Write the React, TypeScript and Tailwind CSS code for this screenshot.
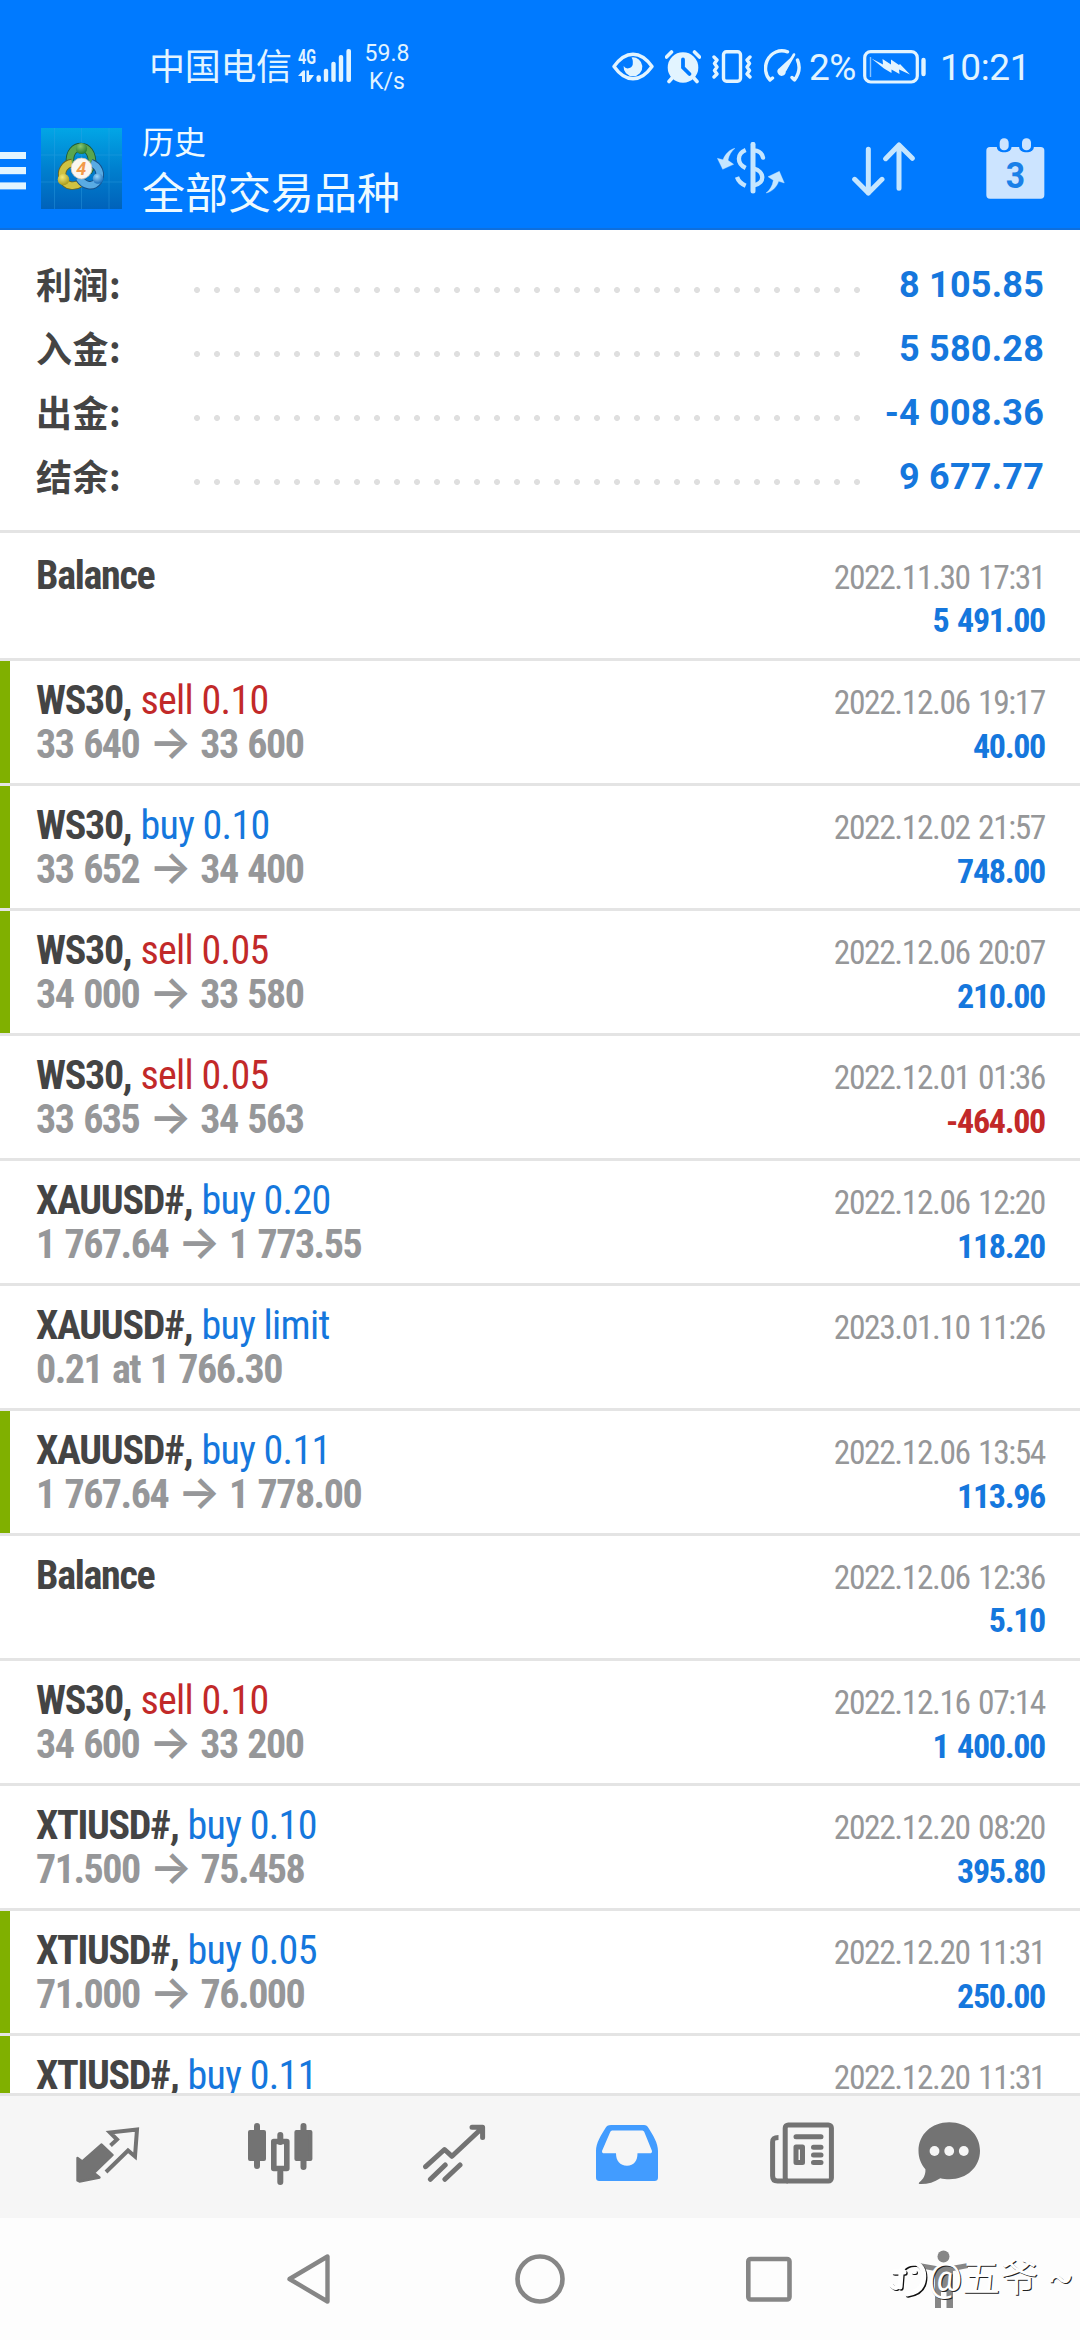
import type { ReactNode } from 'react';

type Deal = {
  symbol: string;
  side?: 'buy' | 'sell';
  action?: string;
  from?: string;
  to?: string;
  note?: string;
  time: string;
  profit?: string;
  marked?: boolean;
};

const summary = [
  { label: '利润:', value: '8 105.85' },
  { label: '入金:', value: '5 580.28' },
  { label: '出金:', value: '-4 008.36' },
  { label: '结余:', value: '9 677.77' },
];

const deals: Deal[] = [
  { symbol: 'Balance', time: '2022.11.30 17:31', profit: '5 491.00' },
  { symbol: 'WS30,', side: 'sell', action: 'sell 0.10', from: '33 640', to: '33 600', time: '2022.12.06 19:17', profit: '40.00', marked: true },
  { symbol: 'WS30,', side: 'buy', action: 'buy 0.10', from: '33 652', to: '34 400', time: '2022.12.02 21:57', profit: '748.00', marked: true },
  { symbol: 'WS30,', side: 'sell', action: 'sell 0.05', from: '34 000', to: '33 580', time: '2022.12.06 20:07', profit: '210.00', marked: true },
  { symbol: 'WS30,', side: 'sell', action: 'sell 0.05', from: '33 635', to: '34 563', time: '2022.12.01 01:36', profit: '-464.00' },
  { symbol: 'XAUUSD#,', side: 'buy', action: 'buy 0.20', from: '1 767.64', to: '1 773.55', time: '2022.12.06 12:20', profit: '118.20' },
  { symbol: 'XAUUSD#,', side: 'buy', action: 'buy limit', note: '0.21 at 1 766.30', time: '2023.01.10 11:26' },
  { symbol: 'XAUUSD#,', side: 'buy', action: 'buy 0.11', from: '1 767.64', to: '1 778.00', time: '2022.12.06 13:54', profit: '113.96', marked: true },
  { symbol: 'Balance', time: '2022.12.06 12:36', profit: '5.10' },
  { symbol: 'WS30,', side: 'sell', action: 'sell 0.10', from: '34 600', to: '33 200', time: '2022.12.16 07:14', profit: '1 400.00' },
  { symbol: 'XTIUSD#,', side: 'buy', action: 'buy 0.10', from: '71.500', to: '75.458', time: '2022.12.20 08:20', profit: '395.80' },
  { symbol: 'XTIUSD#,', side: 'buy', action: 'buy 0.05', from: '71.000', to: '76.000', time: '2022.12.20 11:31', profit: '250.00', marked: true },
  { symbol: 'XTIUSD#,', side: 'buy', action: 'buy 0.11', time: '2022.12.20 11:31', marked: true },
];

function StatusBar() {
  return (
    <div className="flex h-[112px] items-start pt-[40px] text-[#e2f4ff]">
      <span className="ml-[149px] mt-[2px] w-[143px] text-[36px] leading-[52px] whitespace-nowrap tracking-[-0.3px]">中国电信</span>
      <svg className="ml-[6px] mt-[9px] h-[34px] w-[54px] overflow-visible" viewBox="0 0 54 34" fill="currentColor">
        <text x="0" y="15" fontSize="20" fontWeight="700" textLength="18" lengthAdjust="spacingAndGlyphs">
          4G
        </text>
        <path d="M0 27 L5 21.5 L7 21.5 L7 33 L4 33 L4 27 Z M8.5 21.5 L11 21.5 L11 26 L16 26 L11 33 L8.5 33 Z" />
        <rect x="18.5" y="26.3" width="4.4" height="6.7" rx="2" />
        <rect x="25.8" y="19.7" width="4.4" height="13.3" rx="2" />
        <rect x="33.3" y="12.7" width="4.4" height="20.3" rx="2" />
        <rect x="40.8" y="6" width="4.4" height="27" rx="2" />
        <rect x="48.4" y="0" width="4.6" height="33" rx="2" />
      </svg>
      <div className="ml-[11px] w-[48px] text-center text-[23px] leading-[28px]">
        <div>59.8</div>
        <div>K/s</div>
      </div>

      <svg className="ml-[201px] mt-[12px] h-[29px] w-[42px]" viewBox="0 0 42 29" fill="none" stroke="currentColor">
        <path d="M2 14.5 C8 6 14 2.2 21 2.2 S34 6 40 14.5 C34 23 28 26.8 21 26.8 S8 23 2 14.5 Z" strokeWidth="3.4" strokeLinejoin="round" />
        <path d="M19.5 5.5 A9.4 9.4 0 1 1 11.6 14 A5 5 0 0 0 20.8 10.8 C21 8.5 20.5 7 19.5 5.5 Z" fill="currentColor" stroke="none" />
      </svg>
      <svg className="ml-[11px] mt-[10px] h-[34px] w-[36px]" viewBox="0 0 36 34" fill="currentColor">
        <circle cx="18" cy="17.5" r="15.3" />
        <path d="M1.5 7 L6.5 2 M34.5 7 L29.5 2 M4 31.5 L8 27 M32 31.5 L28 27" stroke="currentColor" strokeWidth="3.6" strokeLinecap="round" />
        <path d="M18 9.5 V17.5 L24.5 24" stroke="#007aff" strokeWidth="3.8" strokeLinecap="round" fill="none" />
      </svg>
      <svg className="ml-[11px] mt-[10px] h-[33px] w-[40px]" viewBox="0 0 40 33" fill="none" stroke="currentColor" strokeWidth="3.4" strokeLinecap="round" strokeLinejoin="round">
        <rect x="11.5" y="1.8" width="17" height="29.4" rx="3" />
        <path d="M2 7 L5 10 L2.5 13.5 L5 17 L2.5 20.5 L5 24 L2 27 M38 7 L35 10 L37.5 13.5 L35 17 L37.5 20.5 L35 24 L38 27" />
      </svg>
      <svg className="ml-[12px] mt-[9px] h-[34px] w-[37px]" viewBox="0 0 37 34" fill="none" stroke="currentColor" strokeWidth="3.4" strokeLinecap="round" strokeLinejoin="round">
        <path d="M6 31 C1 26 0.5 18 3 12 C7 3 16 0 23.5 2.8 M33.5 11 C36.5 18 35 25 30.5 31 L28 28.5 M6 31 L8.5 29" />
        <path d="M30 5.5 L21.5 20.5" strokeWidth="2.6" />
        <path d="M29 6.5 L15.5 19 A4.2 4.2 0 1 0 21.8 22.5 Z" fill="currentColor" stroke="none" />
      </svg>
      <span className="ml-[8px] mt-[1px] text-[37px] leading-[54px] tracking-[-0.5px]">2%</span>
      <svg className="ml-[7px] mt-[10px] h-[34px] w-[64px]" viewBox="0 0 64 34" fill="none" stroke="currentColor">
        <rect x="1.7" y="1.7" width="52.6" height="30.3" rx="6" strokeWidth="3.2" />
        <path d="M7.5 7 V27" strokeWidth="1.4" opacity="0.6" />
        <path d="M8.5 8.5 L20 14.5 L19.5 9 L28 14.5 L28 9.5 L36 15 L37 14 L47 24.5 L36 19.5 L36.5 24 L28.5 19.5 L28.5 23 L21 18.5 Z" fill="currentColor" stroke="none" />
        <path d="M60.5 10 V24" strokeWidth="4.4" strokeLinecap="round" />
      </svg>
      <span className="ml-[13px] mt-[1px] text-[37px] leading-[54px] tracking-[-0.4px]">10:21</span>
    </div>
  );
}

function AppLogo() {
  return (
    <svg className="ml-[15px] mt-[16px] h-[81px] w-[81px]" viewBox="0 0 81 81">
      <defs>
        <linearGradient id="logoBg" x1="0" y1="0" x2="0" y2="1">
          <stop offset="0" stopColor="#02a6e6" />
          <stop offset="0.5" stopColor="#0080cf" />
          <stop offset="1" stopColor="#0062ba" />
        </linearGradient>
        <radialGradient id="green" cx="0.4" cy="0.3" r="0.7">
          <stop offset="0" stopColor="#8cc870" />
          <stop offset="1" stopColor="#237a35" />
        </radialGradient>
        <radialGradient id="yellow" cx="0.4" cy="0.3" r="0.7">
          <stop offset="0" stopColor="#f3ea7a" />
          <stop offset="1" stopColor="#a89a1c" />
        </radialGradient>
        <radialGradient id="blue" cx="0.4" cy="0.3" r="0.7">
          <stop offset="0" stopColor="#9ad6fa" />
          <stop offset="1" stopColor="#1b6fbd" />
        </radialGradient>
      </defs>
      <rect width="81" height="81" fill="url(#logoBg)" />
      <path d="M13.5 0 V81 M40.5 0 V81 M68 0 V81 M0 27 H81 M0 54 H81" stroke="#35a5e4" strokeWidth="0.8" opacity="0.45" />
      <path d="M29 35 C28 24 34 19 40 19 S52 25 51 37 L47 44" fill="none" stroke="#1f5a3a" strokeWidth="8.4" />
      <path d="M29 35 C28 24 34 19 40 19 S52 25 51 37 L47 44" fill="none" stroke="#5aa64f" strokeWidth="6.6" />
      <path d="M31 35 C24 36 19 43 22 51 C25 59 34 59 40 55" fill="none" stroke="#6b6420" strokeWidth="8.4" />
      <path d="M31 35 C24 36 19 43 22 51 C25 59 34 59 40 55" fill="none" stroke="#cfc242" strokeWidth="6.6" />
      <path d="M50 35 C58 38 61 46 57 53 C52 60 43 58 38 50" fill="none" stroke="#174f86" strokeWidth="8.4" />
      <path d="M50 35 C58 38 61 46 57 53 C52 60 43 58 38 50" fill="none" stroke="#59abe3" strokeWidth="6.6" />
      <circle cx="40.5" cy="20.5" r="5.6" fill="url(#green)" />
      <circle cx="22.5" cy="51.5" r="5.8" fill="url(#yellow)" />
      <circle cx="57" cy="50.5" r="5.2" fill="url(#blue)" />
      <circle cx="40.5" cy="40.5" r="10.4" fill="#fbf7f2" stroke="#d8c9b8" strokeWidth="0.8" />
      <text x="35.3" y="47" fontSize="18" fontWeight="700" fontStyle="italic" fill="#f29a4a">
        4
      </text>
    </svg>
  );
}

function Header() {
  return (
    <header className="h-[230px] border-b-2 border-[#0e6fdd] bg-[#007aff]">
      <StatusBar />
      <div className="flex items-start text-[#eefaff]">
        <svg className="mt-[40px] h-[38px] w-[26px]" viewBox="0 0 26 38" fill="#e2f5ff">
          <rect y="0" width="26" height="7" />
          <rect y="15" width="26" height="7.2" />
          <rect y="30.4" width="26" height="7" />
        </svg>
        <AppLogo />
        <div className="ml-[20px] w-[300px]">
          <div className="mt-[8px] text-[32px] leading-[46px]">历史</div>
          <div className="mt-[-1px] text-[43px] leading-[58px]">全部交易品种</div>
        </div>
        {/* currency exchange */}
        <svg className="ml-[275px] mt-[30px] h-[52px] w-[68px]" viewBox="49 35 204 156" fill="#c5e6ff" stroke="#c5e6ff">
          <path d="M103 54 C93 62 85 74 82 90 L99 102 L66 117 L50 84 L67 88 C74 71 87 57 103 54 Z" strokeWidth="1" />
          <path d="M196 188 C207 180 215 168 218 150 L202 139 L236 123 L251 158 L234 153 C228 171 213 185 196 188 Z" strokeWidth="1" />
          <path d="M157 42 V182" strokeWidth="15" strokeLinecap="round" fill="none" />
          <path d="M135 59 C108 70 108 100 135 113" strokeWidth="13" fill="none" />
          <path d="M109 140 C113 152 121 160 135 166" strokeWidth="13" strokeLinecap="butt" fill="none" />
          <path d="M160 60 C174 61 184 68 187 82" strokeWidth="13" strokeLinecap="round" fill="none" />
          <path d="M160 115 C190 122 196 158 160 165" strokeWidth="13" fill="none" />
        </svg>
        {/* sort */}
        <svg className="ml-[67px] mt-[30px] h-[54px] w-[63px]" viewBox="451 35 189 162" fill="none" stroke="#c5e6ff" strokeWidth="15" strokeLinecap="round" strokeLinejoin="round">
          <path d="M500 57 V188 M459 147 L500 188 L541 147" />
          <path d="M592 174 V44 M552 85 L592 44 L632 84" />
        </svg>
        {/* calendar */}
        <svg className="ml-[71px] mt-[26px] h-[61px] w-[59px]" viewBox="854 23 177 183">
          <rect x="855" y="50" width="174" height="155" rx="11" fill="#cce4ff" />
          <rect x="886" y="30" width="45" height="36" rx="18" fill="#007aff" />
          <rect x="953" y="30" width="45" height="36" rx="18" fill="#007aff" />
          <rect x="895" y="24" width="27" height="36" rx="13" fill="#cce4ff" />
          <rect x="962" y="24" width="27" height="36" rx="13" fill="#cce4ff" />
          <text x="942" y="173" textAnchor="middle" fontSize="112" fontWeight="700" textLength="58" lengthAdjust="spacingAndGlyphs" fill="#1a80e8">
            3
          </text>
        </svg>
      </div>
    </header>
  );
}

function Summary() {
  return (
    <section className="h-[303px] border-b-[3px] border-[#e4e4e4] px-[36px] pt-[24px]">
      {summary.map((row) => (
        <div key={row.label} className="flex h-[64px] items-center justify-between font-bold">
          <span className="mb-[6px] w-[151px] font-['Noto_Sans_CJK_SC'] text-[36px] leading-[52px] tracking-[0.5px] text-[#444444]">{row.label}</span>
          <div className="mt-[8px] h-[6px] w-[680px] bg-[radial-gradient(circle_at_center,#dfdfdf_2.6px,transparent_3.4px)] bg-[length:20px_6px]" />
          <span className="mb-[2px] w-[177px] text-right text-[36px] tracking-[0.2px] text-[#1577dd]">{row.value}</span>
        </div>
      ))}
    </section>
  );
}

function DealRow({ deal }: { deal: Deal }) {
  const sideColor = deal.side === 'sell' ? 'text-[#c22929]' : 'text-[#1577dd]';
  const profitColor = deal.profit?.startsWith('-') ? 'text-[#c22929]' : 'text-[#1577dd]';

  return (
    <div className="flex h-[125px] shrink-0 border-b-[3px] border-[#e4e4e4] first:h-[128px] first:pt-[3px]">
      <div className={deal.marked ? 'w-[10px] bg-[#80b000]' : 'w-[10px]'} />
      <div className="flex-1 pt-[18px] pl-[26px] pr-[35px] font-stretch-[75%]">
        <div className="flex h-[44px] items-baseline justify-between text-[40px] leading-[44px]">
          <div>
            <span className="font-bold tracking-[-1.3px] text-[#444444]">{deal.symbol}</span>{' '}
            <span className={`tracking-[-0.7px] ${sideColor}`}>{deal.action}</span>
          </div>
          <span className="text-[33.5px] tracking-[-1.4px] [word-spacing:2px] text-[#969799]">{deal.time}</span>
        </div>
        <div className="flex h-[44px] items-baseline justify-between text-[40px] leading-[44px] font-bold tracking-[-1.5px] [word-spacing:2px]">
          <div className="text-[#969799]">
            {deal.from && (
              <>
                {deal.from} <span className="font-['Inter'] text-[45px] leading-[0] font-semibold">→</span> {deal.to}
              </>
            )}
            {deal.note}
          </div>
          <span className={`text-[34px] tracking-[-1.3px] ${profitColor}`}>{deal.profit}</span>
        </div>
      </div>
    </div>
  );
}

function Tab({ className, viewBox, children }: { className: string; viewBox: string; children: ReactNode }) {
  return (
    <svg className={`h-[64px] shrink-0 ${className}`} viewBox={viewBox} fill="none" stroke="#737373" strokeLinecap="round" strokeLinejoin="round">
      {children}
    </svg>
  );
}

function TabBar() {
  return (
    <nav className="flex h-[125px] border-t-[3px] border-[#e4e4e4] bg-[#f6f6f6] pt-[26px]">
      {/* quotes */}
      <Tab className="ml-[76px] w-[64px]" viewBox="0 0 64 64">
        <path d="M1.5 36 L6.3 39.5 L25.6 22.5 L36.6 33 L18 51 L23.5 55.5 L3.5 59.5 L1.5 58.5 Z" fill="#737373" strokeWidth="2.4" />
        <path d="M34.5 23.5 L41 17.5 L34 10.5 L61 7.5 L59 34.5 L52 28.5 L30 50" strokeWidth="4" strokeLinecap="butt" strokeLinejoin="miter" />
      </Tab>
      {/* charts */}
      <Tab className="ml-[108px] w-[66px]" viewBox="0 0 66 64">
        <path d="M9 4 V44 M55.5 4 V45 M32.3 13 V20 M32.3 50 V60" strokeWidth="6" />
        <path d="M2 10 H16 V37 H2 Z M48.4 10 H62.4 V37 H48.4 Z" fill="#737373" strokeWidth="4" />
        <path d="M25.8 19.5 H38.8 V46.5 H25.8 Z" strokeWidth="5.6" />
      </Tab>
      {/* trade */}
      <Tab className="ml-[109px] w-[66px]" viewBox="0 0 66 64">
        <path d="M2.6 44.7 L21.5 27.5 L29 34.3 L59.4 5.8 M49 5.2 H59.6 V15.5 M7.4 57.3 L22.2 43 M21.9 57.3 L37 43" strokeWidth="5" />
      </Tab>
      {/* history */}
      <Tab className="ml-[107px] w-[62px]" viewBox="0 0 62 64">
        <path
          d="M15 3 H48 C50 3 51.5 4 52.5 6 C57 13 62 21 62 29 V55 C62 58 61 59 58 59 H4 C1 59 0 58 0 55 V29 C0 21 5 13 9.5 6 C10.5 4 12 3 15 3 Z M17 8.5 C15.5 8.5 14.5 9 14 10.5 L6 29 C6 30.5 6.5 31.3 8 31.3 H20 C20 39 24 43.7 31 43.7 S41.5 39 41.5 31.3 H54 C55.5 31.3 56 30.5 56 29 L48.5 10.5 C48 9 47 8.5 45.5 8.5 Z"
          fill="#429cff"
          fillRule="evenodd"
          stroke="none"
        />
      </Tab>
      {/* news */}
      <Tab className="ml-[112px] w-[64px]" viewBox="0 0 64 64">
        <rect x="15.2" y="3" width="46.2" height="56" rx="3" strokeWidth="5" />
        <path d="M8.5 15.5 C4 15.5 2.6 17 2.6 20 V54 C2.6 57 4 59 7.5 59 H18" strokeWidth="5" strokeLinecap="butt" />
        <path d="M26 14.7 H51 M43.5 25.2 H51 M43.5 33 H51 M43.5 40.6 H51" strokeWidth="5" />
        <rect x="26" y="25" width="6.5" height="15.5" strokeWidth="5" />
      </Tab>
      {/* messages */}
      <Tab className="ml-[84px] w-[64px]" viewBox="0 0 64 64">
        <path d="M31.3 0.3 C49 0.3 62 12.5 62 28.8 S49 57.3 31.3 57.3 C28 57.3 25 57 22.3 56.2 C16 60.5 9 62.3 1.5 62 C0.5 61.8 0.6 60.8 1.4 60.2 C5.5 57 7.8 52.5 7.4 47.2 C3 42.3 0.5 36 0.5 28.8 C0.5 12.5 13.5 0.3 31.3 0.3 Z" fill="#737373" stroke="none" />
        <circle cx="16.5" cy="29" r="4.9" fill="#f6f6f6" stroke="none" />
        <circle cx="31.2" cy="29" r="4.9" fill="#f6f6f6" stroke="none" />
        <circle cx="45.8" cy="29" r="4.9" fill="#f6f6f6" stroke="none" />
      </Tab>
    </nav>
  );
}

function SystemNav() {
  return (
    <div className="relative flex h-[122px] items-start bg-[#fdfdfd] pt-[34px]">
      <svg className="ml-[285px] h-[54px] w-[48px]" viewBox="0 0 48 54" fill="none" stroke="#868686" strokeWidth="4.4" strokeLinejoin="round">
        <path d="M4.5 27 L42.5 4.5 V49.5 Z" />
      </svg>
      <svg className="ml-[180px] h-[54px] w-[54px]" viewBox="0 0 54 54" fill="none" stroke="#868686" strokeWidth="4.6">
        <circle cx="27" cy="27" r="22.5" />
      </svg>
      <svg className="ml-[177px] h-[54px] w-[50px]" viewBox="0 0 50 54" fill="none" stroke="#868686" strokeWidth="4.6">
        <rect x="4.3" y="7" width="41.2" height="40.5" rx="2.5" />
      </svg>
      <svg className="ml-[124px] h-[60px] w-[52px] overflow-visible" viewBox="0 0 52 60" fill="#868686">
        <circle cx="25.5" cy="4.5" r="6" />
        <path d="M1 11 L18 14 H33 L50 11 V16 L35 19 V56 H28.5 V40 H23 V56 H17 V19 L1 16 Z" />
      </svg>

      {/* watermark */}
      <div className="absolute top-[36px] left-[888px] flex items-center text-white [text-shadow:1px_1px_0_#222]">
        <svg className="h-[44px] w-[40px]" viewBox="0 0 40 44" fill="none" strokeLinecap="round" strokeLinejoin="round">
          <path d="M6 16 H16 M12 31 L13 18 C13 10 19 7 28 7 C35 10 37 18 35 26 C33 34 26 37 19 38" stroke="#111" strokeWidth="5" transform="translate(1.2 1.2)" />
          <path d="M3 29 C7 34 11 32 12 27 M25 16 H27" stroke="#111" strokeWidth="4" transform="translate(1 1)" />
          <path d="M6 16 H16 M12 31 L13 18 C13 10 19 7 28 7 C35 10 37 18 35 26 C33 34 26 37 19 38" stroke="#fff" strokeWidth="5" />
          <path d="M3 29 C7 34 11 32 12 27 M25 16 H27" stroke="#fff" strokeWidth="4" />
        </svg>
        <span className="text-[38px] leading-[48px] whitespace-nowrap">@五爷 ~</span>
      </div>
    </div>
  );
}

export default function App() {
  return (
    <div className="flex h-[2340px] w-[1080px] flex-col overflow-hidden bg-white font-['Roboto','Noto_Sans_CJK_SC',sans-serif]">
      <Header />
      <Summary />
      <main className="flex h-[1560px] flex-col overflow-hidden">
        {deals.map((deal, idx) => (
          <DealRow key={idx} deal={deal} />
        ))}
      </main>
      <TabBar />
      <SystemNav />
    </div>
  );
}
